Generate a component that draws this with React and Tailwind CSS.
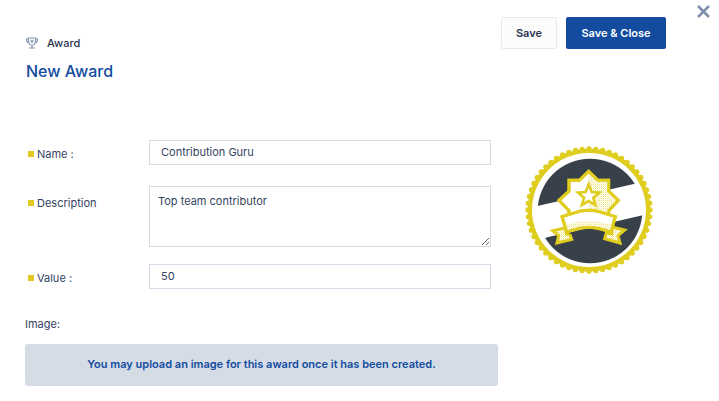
const TEETH = 56;

const teeth = Array.from({ length: TEETH }, (_, i) => {
  const angle = (i * 2 * Math.PI) / TEETH;
  return {
    x: (192 + 183 * Math.cos(angle)).toFixed(1),
    y: (192 + 183 * Math.sin(angle)).toFixed(1),
  };
});

function TrophyIcon() {
  return (
    <svg className="size-3 shrink-0" viewBox="0 0 24 24" fill="none" stroke="#8494b0" strokeWidth="2.200" aria-hidden="true">
      <path d="M5 2h14v6c0 4-3 8-7 9-4-1-7-5-7-9z" />
      <path d="M5 4H1v2c0 3 2 5 5 6M19 4h4v2c0 3-2 5-5 6M12 16v5M6 22h12" />
      <path d="M12 5l1 2 2.200.3-1.600 1.600.4 2.100-2-1-2 1 .4-2.100L8.800 7.300 11 7z" fill="#8494b0" strokeWidth="1" />
    </svg>
  );
}

function AwardBadge() {
  return (
    <svg className="size-32 shrink-0" viewBox="0 0 384 384" role="img" aria-label="Award badge">
      <defs>
        <clipPath id="disc">
          <circle cx="195" cy="195" r="157" />
        </clipPath>
        <pattern id="dots" width="6" height="6" patternUnits="userSpaceOnUse">
          <rect width="6" height="6" fill="#fffdf0" />
          <rect width="3" height="3" fill="#ebe38a" />
          <rect x="3" y="3" width="3" height="3" fill="#f8f4d0" />
        </pattern>
      </defs>
      <g fill="#dfcd1f">
        <circle cx="192" cy="192" r="184" />
        {teeth.map((t, i) => (
          <circle key={i} cx={t.x} cy={t.y} r="8" />
        ))}
      </g>
      <circle cx="192" cy="192" r="171" fill="#fff" />
      <g clipPath="url(#disc)">
        <path d="M0 0H384V101L323 115L37 180L0 188z" fill="#38404a" />
        <path d="M0 299L67 274L353 208L384 201V384H0z" fill="#38404a" />
      </g>
      <g strokeLinejoin="miter" stroke="#dfcd1f" strokeWidth="9">
        <path d="M191 76L219 103H251V135L280 163L251 194V220H132V194L102 163L132 135V103H163z" fill="#fff" />
        <path d="M191 76L219 103H251V135L280 163L251 194V220H191z" fill="url(#dots)" stroke="none" />
        <path d="M191 76L219 103H251V135L280 163L251 194V220H132V194L102 163L132 135V103H163z" fill="none" />
        <path d="M191 115L200 138L223 140L205 155L211 177L191 165L171 177L177 155L159 140L182 138z" fill="#fff" strokeWidth="8" />
        <path d="M122 245L83 254L101 269L96 291L140 280L136 268L124 264z" fill="url(#dots)" />
        <path d="M261 243L299 252L279 269L285 291L239 278L244 261L260 264z" fill="url(#dots)" />
        <path d="M111 212L150 200Q191 186 232 200L271 212L258 258L228 249Q191 239 156 249L125 258z" fill="#fff" />
        <path d="M121 236Q191 217 262 236L258 258L228 249Q191 239 156 249L125 258z" fill="url(#dots)" stroke="none" />
        <path d="M111 212L150 200Q191 186 232 200L271 212L258 258L228 249Q191 239 156 249L125 258z" fill="none" />
      </g>
    </svg>
  );
}

function FieldLabel({ htmlFor, children }) {
  return (
    <label htmlFor={htmlFor} className="flex w-[121px] shrink-0 items-center gap-[3px] pt-[6px]">
      <span className="size-[6px] bg-[#dfcb20]" />
      {children}
    </label>
  );
}

const fieldClass =
  "block min-w-0 flex-1 border border-[#d5dbe6] bg-white outline-none focus:border-[#134c9f]";

export default function App() {
  return (
    <main className="min-h-screen bg-white pb-4 font-['Inter','Liberation_Sans',sans-serif] text-[11px] leading-4 text-[#33435f]">
      <header className="flex items-start pr-[9px] pt-[5px]">
        <div className="flex-1 pl-[26px] pt-[30px]">
          <div className="flex items-center gap-[9px] font-medium text-[#293650]">
            <TrophyIcon />
            <span>Award</span>
          </div>
          <h1 className="mt-2 text-base leading-6 font-medium text-[#134c9f]">New Award</h1>
        </div>
        <div className="flex gap-[9px] pt-3 font-semibold">
          <button type="button" className="h-8 w-14 rounded-[2px] border border-[#e6e9ee] bg-[#fcfcfd] text-[#293650]">
            Save
          </button>
          <button type="button" className="h-8 w-[100px] rounded-[2px] bg-[#134c9f] text-white">
            Save &amp; Close
          </button>
        </div>
        <button type="button" aria-label="Close" className="ml-[31px]">
          <svg className="size-[13px]" viewBox="0 0 13 13" stroke="#7f90ac" strokeWidth="2.500" aria-hidden="true">
            <path d="M1 1l11 11M12 1L1 12" />
          </svg>
        </button>
      </header>

      <div className="flex items-start gap-[27px] pl-[25px] pr-[66px] pt-[57px]">
        <form className="min-w-0 flex-1">
          <div className="flex flex-col pl-[3px] pr-[7px]">
            <div className="flex items-start">
              <FieldLabel htmlFor="name">Name :</FieldLabel>
              <input id="name" type="text" defaultValue="Contribution Guru" className={`${fieldClass} h-[25px] px-[11px] pb-[2px]`} />
            </div>
            <div className="mt-[21px] flex items-start">
              <FieldLabel htmlFor="description">
                <span className="leading-[22px]">Description</span>
              </FieldLabel>
              <textarea id="description" defaultValue="Top team contributor" className={`${fieldClass} h-[61px] resize-y px-2 py-[6px]`} />
            </div>
            <div className="mt-[17px] flex items-start">
              <FieldLabel htmlFor="value">Value :</FieldLabel>
              <input id="value" type="text" inputMode="numeric" defaultValue="50" className={`${fieldClass} h-[25px] px-[11px] pb-[2px]`} />
            </div>
          </div>
          <h2 className="mt-[27px]">Image:</h2>
          <p className="mt-3 rounded-[3px] bg-[#d5dce6] px-4 pb-[14px] pt-3 text-center font-semibold text-[#134c9f]">
            You may upload an image for this award once it has been created.
          </p>
        </form>
        <div className="pt-[6px]">
          <AwardBadge />
        </div>
      </div>
    </main>
  );
}
